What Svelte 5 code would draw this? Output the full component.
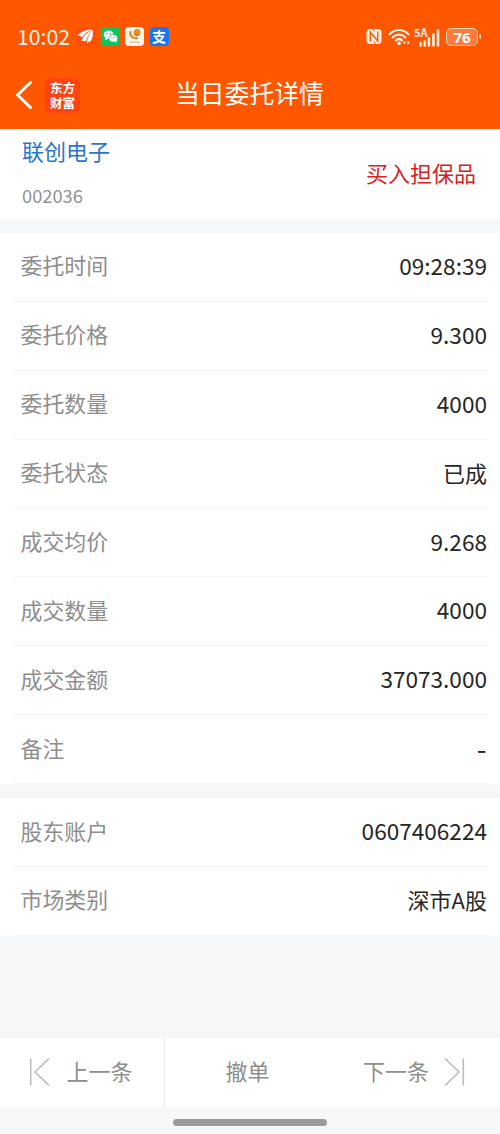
<script>
    const stock = { name: '联创电子', code: '002036', action: '买入担保品' };

    const orderRows = [
        { label: '委托时间', value: '09:28:39' },
        { label: '委托价格', value: '9.300' },
        { label: '委托数量', value: '4000' },
        { label: '委托状态', value: '已成', cjk: true },
        { label: '成交均价', value: '9.268' },
        { label: '成交数量', value: '4000' },
        { label: '成交金额', value: '37073.000' },
        { label: '备注', value: '-', dash: true }
    ];

    const accountRows = [
        { label: '股东账户', value: '0607406224' },
        { label: '市场类别', value: '深市A股', cjk: true }
    ];
</script>

{#snippet rowList(rows)}
    <dl class="rows">
        {#each rows as row}
            <div class="row">
                <dt>{row.label}</dt>
                <dd class:cjk={row.cjk} class:dash={row.dash}>{row.value}</dd>
            </div>
        {/each}
    </dl>
{/snippet}

<div class="screen">
    <header>
        <div class="status-bar">
            <span class="clock">10:02</span>
            <div class="app-icons">
                <svg width="19" height="19" viewBox="0 0 19 19">
                    <rect width="19" height="19" rx="4" fill="#ff4e06" />
                    <path d="M1.500 8.500C5 4 11 2.300 17 2.800C11.500 4.200 8 7 6 10.500C4.800 9.200 3.500 8.500 1.500 8.500Z" fill="white" />
                    <path d="M5.500 14C7 8.800 11.500 4.800 17 3C13 6.800 10.800 10.500 10 14.500C8.500 13.500 7.200 13.500 5.500 14Z" fill="white" />
                    <path d="M10.800 16.500C11.200 11 13.400 6.500 17.200 3C16.800 7.500 17 11 14.800 14.200C13.200 14.300 11.900 15.200 10.800 16.500Z" fill="white" />
                </svg>
                <svg width="19" height="19" viewBox="0 0 19 19">
                    <rect width="19" height="19" rx="4" fill="#08c75e" />
                    <ellipse cx="7.600" cy="7.800" rx="4.900" ry="4.200" fill="white" />
                    <path d="M4.500 10.500L4.200 13.500L7.500 11.500Z" fill="white" />
                    <ellipse cx="12.300" cy="11.400" rx="4.400" ry="3.700" fill="white" stroke="#08c75e" stroke-width=".8" />
                    <path d="M13.500 14L15.500 15.700L15.500 13Z" fill="white" />
                    <circle cx="6" cy="6.800" r=".7" fill="#08c75e" />
                    <circle cx="9.200" cy="6.800" r=".7" fill="#08c75e" />
                    <circle cx="10.900" cy="10.700" r=".6" fill="#08c75e" />
                    <circle cx="13.700" cy="10.700" r=".6" fill="#08c75e" />
                </svg>
                <svg width="19" height="19" viewBox="0 0 19 19">
                    <rect width="19" height="19" rx="4" fill="#fff8ef" />
                    <circle cx="12" cy="5.500" r="3.500" fill="#f08a18" />
                    <path d="M5.500 4C4.500 9 7.500 12 13 11" fill="none" stroke="#e58a20" stroke-width="2.300" />
                    <path d="M9.500 7.500L14 6.500L12 9.500Z" fill="#c9781f" />
                    <path d="M4.500 15.300H15" stroke="#e3bd8d" stroke-width="2" stroke-dasharray="2 .6" />
                </svg>
                <span class="pay-icon">支</span>
            </div>
            <svg class="nfc" width="16" height="17" viewBox="0 0 16 17">
                <rect x=".5" y="1" width="15" height="15" rx="3.500" fill="#fff1e4" />
                <path d="M4.300 13.500V4L11.700 13V3.500" fill="none" stroke="#ff5600" stroke-width="1.400" />
                <path d="M6.500 1L8.500 3.500M7.500 13.500L9.500 16" stroke="#ff5600" stroke-width="1" />
            </svg>
            <svg class="wifi" width="23" height="18" viewBox="0 0 23 18">
                <g fill="none" stroke="#fff1e4" stroke-width="2.200" stroke-linecap="round">
                    <path d="M1.500 6.200C7 .6 15 .6 20.500 6.200" />
                    <path d="M4.700 9.400C8.400 5.800 13.600 5.800 17.300 9.400" />
                    <path d="M7.900 12.400C9.800 10.700 12.200 10.700 14.100 12.400" />
                </g>
                <circle cx="11" cy="15.300" r="1.900" fill="#fff1e4" />
                <path d="M15 14.700L17.300 12.800V16.600ZM21.800 14.700L19.500 12.800V16.600Z" fill="#fff1e4" />
            </svg>
            <div class="signal">
                <span class="network">5A</span>
                <svg width="26" height="18" viewBox="0 0 26 18">
                    <path d="M5.500 16.500V14M9.700 16.500V12.500M13.900 16.500V9.500M18.400 16.500V5.500M23 16.500V1.500" stroke="#fff1e4" stroke-width="2.600" stroke-linecap="round" />
                </svg>
            </div>
            <div class="battery">76</div>
            <i class="battery-tip"></i>
        </div>
        <nav>
            <svg class="back" width="18" height="28" viewBox="0 0 18 28">
                <path d="M15.500 1.500L2.500 14L15.500 26.500" fill="none" stroke="white" stroke-width="3" stroke-linecap="round" stroke-linejoin="round" />
            </svg>
            <div class="logo">东方<br />财富</div>
            <h1>当日委托详情</h1>
        </nav>
    </header>

    <section class="summary">
        <div>
            <div class="stock-name">{stock.name}</div>
            <div class="stock-code">{stock.code}</div>
        </div>
        <div class="action">{stock.action}</div>
    </section>

    {@render rowList(orderRows)}
    {@render rowList(accountRows)}

    <footer>
        <button class="prev">
            <svg width="22" height="28" viewBox="0 0 22 28">
                <path d="M1.700 .5V27.500M20 .5L6 14L20 27.500" />
            </svg>
            <span>上一条</span>
        </button>
        <button class="cancel"><span>撤单</span></button>
        <button class="next">
            <span>下一条</span>
            <svg width="22" height="28" viewBox="0 0 22 28">
                <path d="M20.300 .5V27.500M2 .5L16 14L2 27.500" />
            </svg>
        </button>
    </footer>
    <div class="home-bar"></div>
</div>

<style>
    .screen {
        box-sizing: border-box;
        width: 500px;
        height: 1134px;
        display: flex;
        flex-direction: column;
        overflow: hidden;
        background: #f6f7f9;
        font-family: 'Noto Sans CJK SC', sans-serif;
    }

    header {
        height: 129px;
        flex: none;
        background: #ff5600;
        color: white;
    }

    .status-bar {
        height: 73px;
        box-sizing: border-box;
        padding: 0 19px 0 17px;
        display: flex;
        align-items: center;
    }

    .clock {
        width: 59px;
        padding-bottom: 2px;
        font-size: 21.200px;
        line-height: 30px;
        color: #fff4e8;
    }

    .app-icons {
        display: flex;
        gap: 5.500px;
        flex: 1;
    }

    .pay-icon {
        width: 19px;
        height: 19px;
        border-radius: 4px;
        background: #1677f5;
        font-size: 14px;
        font-weight: 700;
        line-height: 18px;
        text-align: center;
    }

    .nfc {
        margin-right: 6px;
    }

    .wifi {
        margin-right: 4px;
    }

    .signal {
        width: 26px;
        height: 18px;
        margin-right: 5px;
        position: relative;
    }

    .network {
        position: absolute;
        left: -1px;
        top: -2px;
        font: 700 11px/12px 'Noto Sans CJK SC', sans-serif;
        color: #fff1e4;
    }

    .battery {
        width: 32px;
        height: 18px;
        box-sizing: border-box;
        border: 1.500px solid #ffd9bd;
        border-radius: 5px;
        background: #ff7a3c;
        font: 700 15px/16px 'Noto Sans', sans-serif;
        text-align: center;
    }

    .battery-tip {
        width: 2px;
        height: 5px;
        margin-left: 1px;
        background: #ffd9bd;
        border-radius: 1px;
    }

    nav {
        height: 44px;
        padding-left: 15px;
        display: flex;
        align-items: center;
    }

    .logo {
        width: 35px;
        height: 35px;
        box-sizing: border-box;
        padding-top: 2px;
        margin-left: 12px;
        border-radius: 6px;
        background: #ff4411;
        font-size: 12.500px;
        font-weight: 700;
        line-height: 15px;
        text-align: center;
    }

    h1 {
        margin: 0 0 6px 95px;
        font-size: 24.800px;
        font-weight: 400;
        line-height: 36px;
    }

    .summary {
        height: 90px;
        flex: none;
        box-sizing: border-box;
        padding: 0 24px 4px 22px;
        display: flex;
        justify-content: space-between;
        align-items: center;
        background: white;
    }

    .stock-name {
        font-size: 22px;
        line-height: 46px;
        color: #2a75cc;
    }

    .stock-code {
        font-size: 18.300px;
        line-height: 44px;
        color: #929292;
    }

    .action {
        font-size: 22px;
        line-height: 32px;
        color: #dc2020;
    }

    .rows {
        margin: 14px 0 0;
        padding: 0 12px;
        background: white;
    }

    .row {
        height: 68.900px;
        box-sizing: border-box;
        padding: 0 1px 0 8.500px;
        border-bottom: 1px solid #f5f5f6;
        display: flex;
        justify-content: space-between;
        align-items: center;
    }

    dt {
        padding-bottom: 3px;
        font-size: 21.900px;
        line-height: 32px;
        color: #8e8e8e;
    }

    dd {
        margin: 0;
        padding-bottom: 2px;
        font-size: 22.600px;
        line-height: 32px;
        color: #262626;
    }

    dd.cjk {
        padding-bottom: 4px;
        font-size: 22px;
    }

    dd.dash {
        padding: 3px 0 0;
        font-family: Inter, sans-serif;
    }

    footer {
        height: 69px;
        flex: none;
        margin-top: 102px;
        display: flex;
        background: white;
    }

    button {
        border: 0;
        padding: 0;
        display: flex;
        align-items: center;
        background: none;
        font: 22px/32px 'Noto Sans CJK SC', sans-serif;
        color: #8e8e8e;
    }

    button span {
        padding-bottom: 4px;
    }

    button path {
        fill: none;
        stroke: #bdbdbd;
        stroke-width: 1.600;
    }

    .prev {
        width: 165px;
        box-sizing: border-box;
        padding-left: 29px;
        gap: 15.500px;
        border-right: 1px solid #e9eaec;
    }

    .cancel {
        width: 165px;
        justify-content: center;
    }

    .next {
        flex: 1;
        padding-left: 33px;
        gap: 14px;
    }

    .home-bar {
        width: 154px;
        height: 7px;
        flex: none;
        margin: 12px auto 0;
        border-radius: 4px;
        background: #9a9b9d;
    }
</style>
